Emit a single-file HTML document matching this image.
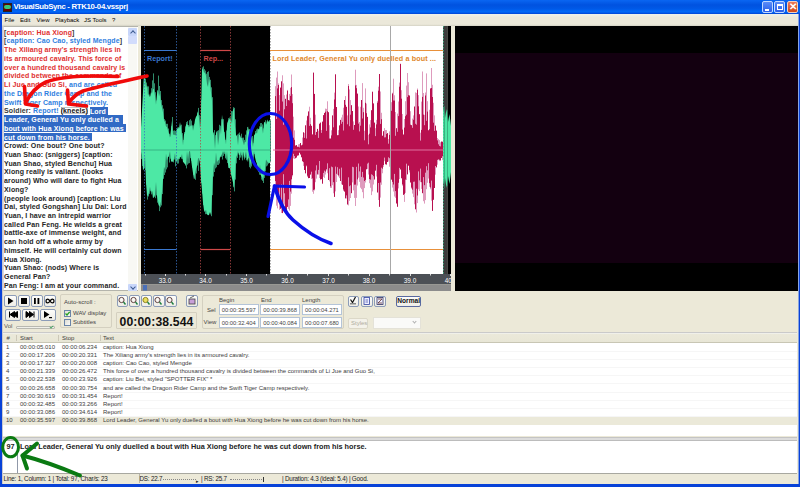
<!DOCTYPE html>
<html><head><meta charset="utf-8">
<style>
*{margin:0;padding:0;box-sizing:border-box}
html,body{width:800px;height:487px;overflow:hidden;background:#ece9d8;font-family:"Liberation Sans",sans-serif}
.a{position:absolute}
#title{left:0;top:0;width:800px;height:14px;background:linear-gradient(#0a66f2 0%,#0052e0 35%,#0058e6 60%,#0068f8 85%,#0042d4 100%)}
#menu{left:2px;top:14px;width:796px;height:12px;background:linear-gradient(#eef0ea,#ebe8da 30%,#ebe8da 85%,#d4d2c4)}
.mi{position:absolute;top:16.5px;font-size:6px;color:#000;white-space:nowrap}
#tp{left:2.5px;top:26px;width:136.5px;height:265px;background:#fff;border:1px solid #b4b4ac;border-left-color:#d8d8e0;overflow:hidden}
#tp .l{position:absolute;left:0.6px;font-weight:bold;font-size:7px;letter-spacing:0.1px;white-space:nowrap;color:#262626;line-height:8.7px}
.r{color:#e03030}.b{color:#3080e0}.g{color:#383838}
.sel{background:#316ac5;color:#fff;padding:0.6px 0}
.hl{box-shadow:inset 0 0 0 0.6px #909090;color:#111}
#vid{left:455px;top:26px;width:342.5px;height:265px;background:#000}
#vidp{left:455px;top:53px;width:342.5px;height:210px;background:#130010}
.tb{position:absolute;border:1px solid #8c9cb8;border-radius:2px;background:linear-gradient(#fdfdfb,#eeede6)}
.lst{position:absolute;font-size:6px;color:#3c3c3c;white-space:nowrap}
.bx{position:absolute;width:40px;height:11px;border:1px solid #b4c4d8;background:#fff;font-size:5.8px;color:#444;padding:1.8px 0 0 2px;white-space:nowrap}
</style></head><body>
<!-- window frame -->
<div class="a" style="left:0;top:0;width:2px;height:487px;background:#0842d8"></div><div class="a" style="left:2px;top:14px;width:1px;height:470px;background:#c8c8d0"></div>
<div class="a" style="left:797.5px;top:14px;width:1px;height:470px;background:#8aa4e0"></div><div class="a" style="left:798.5px;top:0;width:1.5px;height:487px;background:#0842d8"></div>
<div class="a" style="left:0;top:484px;width:800px;height:3px;background:#0842d8"></div>
<div id="title" class="a"></div>
<!-- icon -->
<div class="a" style="left:3px;top:3px;width:9px;height:9px;background:#600;border:1px solid #222"></div>
<div class="a" style="left:4px;top:5px;width:7px;height:4px;background:#38c878;border-radius:2px"></div>
<div class="a" style="left:13.5px;top:2.3px;font-size:7.8px;font-weight:bold;color:#fff;white-space:nowrap;letter-spacing:-0.32px">VisualSubSync - RTK10-04.vssprj</div>
<!-- title buttons -->
<div class="a" style="left:762px;top:1px;width:11px;height:12px;border:1px solid #c0d8ff;border-radius:2px;background:linear-gradient(#5a8cf8,#2a5ee8)"></div>
<div class="a" style="left:765px;top:9px;width:4px;height:1.5px;background:#fff"></div>
<div class="a" style="left:774px;top:1px;width:11px;height:12px;border:1px solid #c0d8ff;border-radius:2px;background:linear-gradient(#5a8cf8,#2a5ee8)"></div>
<div class="a" style="left:777px;top:4px;width:6px;height:6px;border:1px solid #fff;border-top-width:2px"></div>
<div class="a" style="left:787px;top:1px;width:11px;height:12px;border:1px solid #f0d0c0;border-radius:2px;background:linear-gradient(#e8785a,#d04818)"></div>
<div class="a" style="left:789px;top:2px;font-size:10px;color:#fff;font-weight:bold;line-height:10px">&#x2715;</div>
<div id="menu" class="a"></div>
<div class="mi" style="left:4.6px">File</div>
<div class="mi" style="left:20px">Edit</div>
<div class="mi" style="left:36.6px">View</div>
<div class="mi" style="left:55px">Playback</div>
<div class="mi" style="left:84px">JS Tools</div>
<div class="mi" style="left:112px">?</div>

<!-- text panel -->
<div id="tp" class="a">
<div class="l" style="top:1.70px"><span class="g">[</span><span class="r">caption: Hua Xiong</span><span class="g">]</span></div>
<div class="l" style="top:10.43px"><span class="g">[</span><span class="b">caption: Cao Cao, styled Mengde</span><span class="g">]</span></div>
<div class="l" style="top:19.16px"><span class="r">The Xiliang army's strength lies in</span></div>
<div class="l" style="top:27.89px"><span class="r">its armoured cavalry. This force of</span></div>
<div class="l" style="top:36.62px"><span class="r">over a hundred thousand cavalry is</span></div>
<div class="l" style="top:45.35px"><span class="r">divided between the commands of</span></div>
<div class="l" style="top:54.08px"><span class="r">Li Jue and Guo Si,</span><span class="b"> and are called</span></div>
<div class="l" style="top:62.81px"><span class="b">the Dragon Rider Camp and the</span></div>
<div class="l" style="top:71.54px"><span class="b">Swift Tiger Camp respectively.</span></div>
<div class="l" style="top:80.27px"><span class="g">Soldier: </span><span class="b">Report!</span> <span class="hl">(kneels)</span> <span class="sel">Lord&nbsp;</span></div>
<div class="l" style="top:89.00px"><span class="sel">Leader, General Yu only duelled a&nbsp;&nbsp;</span></div>
<div class="l" style="top:97.73px"><span class="sel">bout with Hua Xiong before he was&nbsp;</span></div>
<div class="l" style="top:106.46px"><span class="sel">cut down from his horse.&nbsp;</span></div>
<div class="l" style="top:115.19px">Crowd: One bout? One bout?</div>
<div class="l" style="top:123.92px">Yuan Shao: (sniggers) [caption:</div>
<div class="l" style="top:132.65px">Yuan Shao, styled Benchu] Hua</div>
<div class="l" style="top:141.38px">Xiong really is valiant. (looks</div>
<div class="l" style="top:150.11px">around) Who will dare to fight Hua</div>
<div class="l" style="top:158.84px">Xiong?</div>
<div class="l" style="top:167.57px">(people look around) [caption: Liu</div>
<div class="l" style="top:176.30px">Dai, styled Gongshan] Liu Dai: Lord</div>
<div class="l" style="top:185.03px">Yuan, I have an intrepid warrior</div>
<div class="l" style="top:193.76px">called Pan Feng. He wields a great</div>
<div class="l" style="top:202.49px">battle-axe of immense weight, and</div>
<div class="l" style="top:211.22px">can hold off a whole army by</div>
<div class="l" style="top:219.95px">himself. He will certainly cut down</div>
<div class="l" style="top:228.68px">Hua Xiong.</div>
<div class="l" style="top:237.41px">Yuan Shao: (nods) Where is</div>
<div class="l" style="top:246.14px">General Pan?</div>
<div class="l" style="top:254.87px">Pan Feng: I am at your command.</div>
<div id="sb"></div>
</div>

<!-- wave -->
<svg class="a" style="left:141px;top:26px" width="310" height="265" viewBox="141 26 310 265">
<rect x="141" y="26" width="129" height="248" fill="#000"/>
<rect x="270" y="26" width="173" height="248" fill="#fff"/>
<rect x="443" y="26" width="4.5" height="248" fill="#3c3c3c"/>
<rect x="447.5" y="26" width="3.5" height="248" fill="#000"/>
<path d="M141.5,126.4V159.0M142.5,114.3V166.0M143.5,89.8V168.8M144.5,77.1V168.1M145.5,78.7V170.1M146.5,82.5V184.8M147.5,86.4V199.6M148.5,86.4V196.5M149.5,97.4V193.8M150.5,96.2V190.8M151.5,88.2V194.4M152.5,80.4V189.5M153.5,73.4V197.8M154.5,83.3V196.8M155.5,92.2V198.2M156.5,100.4V195.4M157.5,90.4V202.7M158.5,75.6V204.5M159.5,86.0V211.1M160.5,91.0V207.3M161.5,100.1V205.5M162.5,105.2V194.1M163.5,108.6V178.8M164.5,119.1V175.0M165.5,120.5V172.5M166.5,123.8V169.4M167.5,123.8V167.4M168.5,128.5V156.9M169.5,133.7V162.5M170.5,139.5V158.7M171.5,126.2V161.8M172.5,117.0V161.3M173.5,130.7V162.4M174.5,130.4V159.5M175.5,131.0V166.4M176.5,129.9V157.3M177.5,130.8V163.6M178.5,127.4V163.5M179.5,127.9V159.2M180.5,125.6V153.1M181.5,124.7V158.7M182.5,133.1V158.9M183.5,139.9V156.6M184.5,132.0V162.0M185.5,126.4V165.6M186.5,122.1V168.4M187.5,121.1V164.7M188.5,125.0V163.5M189.5,120.2V163.1M190.5,119.1V158.1M191.5,120.6V160.8M192.5,125.4V167.6M193.5,125.4V174.9M194.5,123.9V178.7M195.5,119.9V179.8M196.5,119.8V173.5M197.5,112.6V165.5M198.5,107.9V170.9M199.5,115.2V160.5M200.5,126.0V166.7M201.5,99.9V183.0M202.5,67.4V193.6M203.5,66.3V205.1M204.5,69.1V211.7M205.5,70.6V214.2M206.5,73.7V214.1M207.5,72.0V212.2M208.5,71.3V214.3M209.5,76.9V208.8M210.5,79.8V212.1M211.5,87.3V216.2M212.5,97.2V195.2M213.5,132.5V176.6M214.5,130.1V172.0M215.5,135.1V168.4M216.5,131.5V167.3M217.5,130.8V164.9M218.5,130.2V164.9M219.5,124.8V163.5M220.5,125.7V157.3M221.5,119.3V156.8M222.5,119.3V159.5M223.5,119.2V155.9M224.5,132.1V154.1M225.5,139.8V158.3M226.5,130.5V159.7M227.5,122.5V163.1M228.5,118.2V167.9M229.5,119.3V163.3M230.5,119.0V167.4M231.5,111.0V174.4M232.5,111.2V176.0M233.5,107.2V186.8M234.5,107.8V191.4M235.5,119.3V179.6M236.5,135.6V163.4M237.5,134.5V157.9M238.5,133.6V153.2M239.5,132.5V160.0M240.5,140.3V157.6M241.5,133.7V155.2M242.5,137.7V160.4M243.5,137.6V152.1M244.5,139.9V159.5M245.5,134.7V157.7M246.5,130.4V160.3M247.5,127.0V154.0M248.5,129.4V158.2M249.5,129.1V167.2M250.5,139.4V168.4M251.5,136.5V166.5M252.5,136.0V161.1M253.5,143.3V162.6M254.5,135.3V154.0M255.5,131.0V156.5M256.5,129.4V161.9M257.5,128.5V167.6M258.5,129.5V168.7M259.5,126.3V174.7M260.5,123.1V175.0M261.5,123.0V179.6M262.5,124.4V180.8M263.5,128.4V183.0M264.5,122.5V177.9M265.5,120.2V171.4M266.5,124.1V166.4M267.5,119.8V165.5M268.5,121.8V163.7M269.5,120.0V160.6M270.5,120.4V161.7" stroke="#2f8c6a" stroke-width="1" fill="none"/>
<path d="M141,128.6 L142,109.9 L143,91.7 L144,73.3 L145,77.9 L146,88.1 L147,84.4 L148,95.8 L149,93.6 L150,97.4 L151,92.1 L152,93.7 L153,89.0 L154,89.2 L155,96.1 L156,104.7 L157,94.2 L158,89.5 L159,96.6 L160,93.0 L161,103.4 L162,107.7 L163,112.2 L164,120.3 L165,122.2 L166,126.4 L167,127.0 L168,130.6 L169,133.7 L170,137.7 L171,129.6 L172,120.8 L173,134.0 L174,135.3 L175,134.4 L176,135.7 L177,129.6 L178,126.8 L179,129.1 L180,122.1 L181,128.3 L182,135.5 L183,145.2 L184,134.2 L185,132.9 L186,124.3 L187,124.3 L188,125.2 L189,127.4 L190,125.2 L191,126.6 L192,124.3 L193,130.7 L194,126.8 L195,119.7 L196,116.7 L197,115.2 L198,111.1 L199,118.1 L200,128.5 L201,112.8 L202,69.2 L203,69.3 L204,72.5 L205,72.8 L206,75.6 L207,84.1 L208,87.0 L209,78.2 L210,83.2 L211,92.4 L212,100.7 L213,131.9 L214,135.2 L215,149.0 L216,133.5 L217,131.8 L218,145.2 L219,138.3 L220,127.3 L221,134.7 L222,114.7 L223,123.1 L224,130.6 L225,137.1 L226,144.4 L227,125.4 L228,120.7 L229,120.1 L230,116.6 L231,120.0 L232,123.8 L233,110.0 L234,108.4 L235,126.5 L236,135.1 L237,136.4 L238,145.2 L239,135.1 L240,135.0 L241,138.1 L242,138.3 L243,142.0 L244,145.3 L245,141.5 L246,142.3 L247,132.9 L248,126.2 L249,132.3 L250,132.5 L251,136.9 L252,141.1 L253,147.0 L254,135.4 L255,133.9 L256,132.4 L257,133.7 L258,128.4 L259,129.7 L260,127.6 L261,126.3 L262,127.0 L263,133.7 L264,122.8 L265,121.7 L266,125.0 L267,120.6 L268,122.0 L269,121.1 L270,121.7 L270,162.8 L269,163.2 L268,162.2 L267,161.2 L266,159.6 L265,169.2 L264,173.9 L263,181.0 L262,176.5 L261,176.6 L260,164.2 L259,172.5 L258,170.8 L257,164.1 L256,161.4 L255,157.2 L254,151.0 L253,157.5 L252,160.4 L251,160.7 L250,166.0 L249,152.7 L248,162.3 L247,158.7 L246,151.0 L245,155.4 L244,158.5 L243,151.0 L242,159.0 L241,151.0 L240,154.4 L239,155.5 L238,151.0 L237,155.2 L236,157.3 L235,176.3 L234,188.6 L233,182.5 L232,178.2 L231,174.3 L230,168.3 L229,168.2 L228,163.8 L227,151.0 L226,159.1 L225,151.0 L224,153.2 L223,151.0 L222,154.0 L221,155.7 L220,157.0 L219,159.9 L218,160.5 L217,162.3 L216,152.6 L215,166.2 L214,162.6 L213,173.6 L212,194.2 L211,215.3 L210,211.9 L209,215.1 L208,215.2 L207,214.3 L206,209.8 L205,211.4 L204,209.9 L203,202.5 L202,190.1 L201,179.2 L200,163.9 L199,157.7 L198,158.8 L197,166.3 L196,169.0 L195,173.7 L194,179.5 L193,172.9 L192,166.4 L191,159.1 L190,151.0 L189,151.5 L188,159.4 L187,151.0 L186,164.8 L185,164.2 L184,163.0 L183,161.8 L182,154.1 L181,157.5 L180,156.8 L179,159.1 L178,158.4 L177,160.4 L176,161.8 L175,153.0 L174,158.4 L173,162.1 L172,161.3 L171,161.0 L170,151.0 L169,155.4 L168,157.0 L167,160.6 L166,153.5 L165,169.3 L164,166.7 L163,179.7 L162,191.6 L161,201.4 L160,205.6 L159,206.6 L158,200.6 L157,196.1 L156,182.1 L155,194.8 L154,196.4 L153,198.2 L152,190.6 L151,192.8 L150,186.8 L149,192.6 L148,195.8 L147,195.6 L146,182.4 L145,155.0 L144,168.8 L143,170.5 L142,155.2 L141,151.0Z" fill="#4de8a5"/>
<line x1="141" y1="150" x2="270" y2="150" stroke="#36b484" stroke-width="1"/>
<path d="M275.5,86.2V188.0M276.5,77.6V205.7M277.5,71.5V208.4M278.5,83.4V202.5M279.5,95.1V209.9M280.5,89.8V208.7M281.5,83.2V213.0M282.5,75.3V209.4M283.5,83.4V208.7M284.5,95.2V204.6M285.5,101.9V209.3M286.5,94.5V210.5M287.5,89.9V206.1M288.5,103.8V208.9M289.5,93.9V210.6M290.5,87.9V205.9M291.5,74.5V193.7M292.5,94.1V176.4M293.5,116.7V158.4M294.5,130.4V159.0M295.5,151.1V158.5M296.5,152.1V150.5M297.5,151.1V152.5M298.5,144.3V155.5M299.5,144.0V152.5M300.5,143.3V152.2M301.5,146.0V156.9M302.5,137.6V155.6M303.5,132.4V165.9M304.5,132.9V167.2M305.5,134.0V173.7M306.5,120.5V166.5M307.5,115.6V177.0M308.5,116.5V177.9M309.5,106.7V177.7M310.5,117.8V174.0M311.5,128.7V179.0M312.5,135.4V191.7M313.5,74.5V193.8M314.5,96.2V190.5M315.5,114.7V182.2M316.5,133.8V178.6M317.5,130.6V175.0M318.5,130.8V174.6M319.5,129.8V178.0M320.5,124.0V180.2M321.5,130.0V178.8M322.5,121.2V176.8M323.5,117.3V176.8M324.5,117.7V177.9M325.5,108.6V174.5M326.5,108.9V170.4M327.5,101.3V173.2M328.5,117.4V175.9M329.5,125.2V181.4M330.5,140.7V188.0M331.5,130.3V187.9M332.5,117.0V185.2M333.5,108.9V193.3M334.5,92.6V190.3M335.5,76.9V191.4M336.5,108.3V182.0M337.5,137.5V174.8M338.5,130.2V176.6M339.5,131.1V178.1M340.5,121.6V176.7M341.5,117.5V184.3M342.5,114.7V184.3M343.5,107.7V191.0M344.5,100.2V188.5M345.5,96.1V194.5M346.5,111.2V198.5M347.5,115.4V203.0M348.5,84.1V205.4M349.5,89.4V200.9M350.5,100.1V198.0M351.5,105.0V190.9M352.5,113.6V182.4M353.5,121.4V190.4M354.5,128.9V197.9M355.5,69.7V206.0M356.5,84.9V197.9M357.5,97.4V185.5M358.5,106.5V177.7M359.5,122.0V181.8M360.5,106.8V187.7M361.5,104.9V189.2M362.5,83.1V192.2M363.5,107.8V198.3M364.5,130.8V188.1M365.5,88.4V182.5M366.5,103.6V168.1M367.5,116.7V168.9M368.5,134.8V174.5M369.5,124.4V183.2M370.5,120.1V187.8M371.5,111.1V195.1M372.5,92.2V191.4M373.5,106.6V184.5M374.5,123.0V174.5M375.5,128.2V170.8M376.5,119.9V176.5M377.5,100.9V189.0M378.5,86.7V200.0M379.5,82.1V206.4M380.5,91.5V197.6M381.5,112.8V184.8M382.5,141.1V173.3M383.5,131.0V166.9M384.5,128.1V161.2M385.5,130.0V157.3M386.5,130.0V165.1M387.5,133.0V155.7M388.5,139.1V161.5M389.5,131.4V166.7M390.5,116.8V174.0M391.5,102.2V180.0M392.5,92.7V187.6M393.5,78.7V191.5M394.5,95.3V196.5M395.5,112.0V197.8M396.5,136.9V201.6M397.5,113.6V197.8M398.5,101.5V188.4M399.5,82.6V179.0M400.5,71.2V164.7M401.5,90.2V173.7M402.5,114.0V185.7M403.5,136.0V191.0M404.5,119.0V201.9M405.5,101.2V192.9M406.5,85.6V180.0M407.5,73.0V169.3M408.5,82.2V162.3M409.5,97.3V172.5M410.5,111.2V180.9M411.5,125.3V188.7M412.5,118.6V193.6M413.5,115.4V197.1M414.5,107.0V204.3M415.5,92.4V207.7M416.5,92.9V212.5M417.5,88.5V203.1M418.5,95.1V189.3M419.5,117.6V191.1M420.5,132.7V182.1M421.5,101.6V188.9M422.5,71.5V192.2M423.5,93.0V201.2M424.5,114.9V203.6M425.5,92.5V200.1M426.5,73.4V189.2M427.5,101.2V182.8M428.5,130.4V178.5M429.5,109.8V186.8M430.5,90.5V189.3M431.5,68.0V200.7M432.5,84.8V210.2M433.5,102.8V197.3M434.5,115.4V186.8M435.5,127.3V174.7M436.5,132.1V163.1M437.5,138.0V164.7M438.5,139.2V160.2M439.5,140.1V161.1M440.5,142.3V157.2M441.5,145.4V153.7M442.5,141.7V160.2M443.5,144.8V157.6" stroke="#d070a0" stroke-width="0.7" fill="none"/>
<path d="M275.5,96.1V181.1M276.5,119.0V196.5M277.5,88.4V192.9M278.5,85.0V197.6M279.5,110.7V184.8M280.5,87.6V208.7M281.5,81.3V184.4M282.5,101.5V213.1M283.5,124.8V174.2M284.5,109.3V193.3M285.5,98.8V211.0M286.5,106.0V210.6M287.5,90.8V206.9M288.5,100.1V199.4M289.5,100.5V180.9M290.5,95.9V191.6M291.5,87.1V179.3M292.5,103.2V175.1M293.5,137.7V153.8M294.5,139.8V156.0M295.5,145.5V158.1M296.5,145.1V157.6M297.5,146.7V155.7M298.5,146.9V155.2M299.5,147.4V152.7M300.5,143.0V154.5M301.5,145.3V157.3M302.5,144.7V161.3M303.5,132.4V162.1M304.5,137.9V170.0M305.5,125.3V173.1M306.5,138.5V165.6M307.5,116.2V175.7M308.5,111.4V178.2M309.5,125.9V178.0M310.5,124.2V174.6M311.5,125.8V171.7M312.5,134.4V178.4M313.5,72.6V189.9M314.5,93.9V189.4M315.5,134.9V170.5M316.5,131.9V165.3M317.5,128.9V173.9M318.5,137.9V169.9M319.5,123.7V161.0M320.5,122.6V179.2M321.5,132.9V179.2M322.5,121.9V183.7M323.5,115.1V172.9M324.5,112.9V170.6M325.5,111.7V171.6M326.5,130.9V169.1M327.5,111.2V163.3M328.5,112.2V180.0M329.5,138.5V168.2M330.5,138.5V186.3M331.5,135.4V166.6M332.5,115.4V167.2M333.5,127.3V182.2M334.5,99.5V196.9M335.5,74.3V166.6M336.5,107.0V173.8M337.5,135.2V167.2M338.5,135.1V175.4M339.5,125.4V168.8M340.5,119.9V181.0M341.5,123.8V167.6M342.5,121.9V184.8M343.5,130.5V189.5M344.5,100.0V191.6M345.5,104.8V198.4M346.5,106.8V195.4M347.5,124.3V204.5M348.5,86.0V177.3M349.5,126.2V186.2M350.5,114.7V185.3M351.5,105.3V193.2M352.5,111.0V166.8M353.5,129.8V167.2M354.5,125.0V184.7M355.5,85.4V184.6M356.5,88.2V166.8M357.5,93.6V179.4M358.5,123.6V163.5M359.5,131.4V171.4M360.5,125.7V166.5M361.5,100.0V176.9M362.5,118.5V171.9M363.5,112.2V177.5M364.5,140.3V181.0M365.5,102.8V179.9M366.5,113.2V169.3M367.5,117.0V163.6M368.5,144.3V162.7M369.5,133.7V179.0M370.5,127.4V179.6M371.5,110.2V174.3M372.5,91.7V174.9M373.5,103.4V176.2M374.5,122.6V179.5M375.5,136.1V170.5M376.5,124.4V164.8M377.5,102.7V192.5M378.5,90.7V183.0M379.5,74.0V206.8M380.5,123.9V182.5M381.5,119.2V167.7M382.5,135.7V168.7M383.5,131.3V165.0M384.5,137.4V157.6M385.5,137.3V164.3M386.5,133.9V164.3M387.5,133.2V162.0M388.5,143.7V157.3M389.5,134.9V158.2M390.5,117.0V175.2M391.5,110.8V179.4M392.5,93.6V181.9M393.5,100.5V184.5M394.5,100.6V173.9M395.5,135.8V191.1M396.5,128.2V203.5M397.5,131.8V206.8M398.5,116.1V182.8M399.5,86.7V167.9M400.5,63.8V169.5M401.5,98.7V178.3M402.5,129.6V184.4M403.5,134.5V194.9M404.5,127.6V193.9M405.5,116.2V179.6M406.5,114.7V163.7M407.5,97.1V174.4M408.5,95.2V165.7M409.5,95.5V170.2M410.5,124.7V182.5M411.5,125.2V187.6M412.5,127.8V189.7M413.5,119.8V181.8M414.5,106.5V181.6M415.5,123.8V209.3M416.5,124.7V188.7M417.5,89.9V195.5M418.5,106.3V171.4M419.5,114.2V180.4M420.5,140.6V168.6M421.5,129.9V182.2M422.5,96.9V193.2M423.5,114.6V177.1M424.5,125.2V185.2M425.5,95.5V172.7M426.5,120.8V166.2M427.5,111.6V170.3M428.5,130.3V163.2M429.5,129.2V183.2M430.5,88.4V187.5M431.5,88.0V180.6M432.5,97.0V210.9M433.5,122.7V199.8M434.5,130.9V188.0M435.5,125.6V166.0M436.5,130.6V167.4M437.5,140.4V159.9M438.5,144.3V159.2M439.5,145.9V159.8M440.5,146.4V160.5M441.5,141.5V158.0M442.5,141.8V156.2" stroke="#b8104f" stroke-width="1" fill="none"/>
<line x1="273" y1="150" x2="443" y2="150" stroke="#e070a0" stroke-width="1"/>
<path d="M443,112 L444,106 L445,118 L446.5,109 L448,122 L449.5,114 L451,126 V172 L449.5,184 L448,176 L446.5,188 L445,178 L444,186 L443,180Z" fill="#4de8a5"/><path d="M444.5,106V188 M447.5,110V186" stroke="#2f8c6a" stroke-width="0.6"/>
<g stroke-width="1" stroke-dasharray="1.5,1.5" opacity="0.75">
<line x1="144.5" y1="26" x2="144.5" y2="274" stroke="#3a70c0"/>
<line x1="176.5" y1="26" x2="176.5" y2="274" stroke="#3a70c0"/>
<line x1="200.5" y1="26" x2="200.5" y2="274" stroke="#b04848"/>
<line x1="230.5" y1="26" x2="230.5" y2="274" stroke="#b04848"/>
<line x1="270.5" y1="26" x2="270.5" y2="274" stroke="#909090"/>
<line x1="443.5" y1="26" x2="443.5" y2="274" stroke="#40c090"/>
</g>
<line x1="144" y1="50.5" x2="176.5" y2="50.5" stroke="#3a78d0" stroke-width="1.2"/>
<line x1="144" y1="249.5" x2="176.5" y2="249.5" stroke="#3a78d0" stroke-width="1.2"/>
<line x1="200.5" y1="50.5" x2="230.5" y2="50.5" stroke="#d04848" stroke-width="1.2"/>
<line x1="200.5" y1="249.5" x2="230.5" y2="249.5" stroke="#d04848" stroke-width="1.2"/>
<line x1="270" y1="50.5" x2="443" y2="50.5" stroke="#e8903a" stroke-width="1.2"/>
<line x1="270" y1="249.5" x2="443" y2="249.5" stroke="#e8903a" stroke-width="1.2"/>
<line x1="390.5" y1="26" x2="390.5" y2="274" stroke="#a8a8a8" stroke-width="1"/>
<g font-family="Liberation Sans" font-weight="bold" font-size="7.2">
<text x="147" y="60.5" fill="#3a78d0">Report!</text>
<text x="203.5" y="60.5" fill="#d04848">Rep...</text>
<text x="272.5" y="60.5" fill="#e0862a" letter-spacing="0.12">Lord Leader, General Yu only duelled a bout ...</text>
</g>
<rect x="141" y="274" width="310" height="10.4" fill="#4c5056"/>
<rect x="141" y="284.4" width="310" height="6.6" fill="#8c8c8c"/>
<rect x="143" y="285" width="4" height="5.5" fill="#4a70b8"/>
<g fill="#dcdcdc">
<rect x="145" y="274" width="1" height="1.5"/><rect x="165" y="274" width="1" height="2"/><rect x="185" y="274" width="1" height="1.5"/><rect x="205" y="274" width="1" height="2"/><rect x="226" y="274" width="1" height="1.5"/><rect x="246" y="274" width="1" height="2"/><rect x="266" y="274" width="1" height="1.5"/><rect x="287" y="274" width="1" height="2"/><rect x="307" y="274" width="1" height="1.5"/><rect x="328" y="274" width="1" height="2"/><rect x="348" y="274" width="1" height="1.5"/><rect x="369" y="274" width="1" height="2"/><rect x="389" y="274" width="1" height="1.5"/><rect x="410" y="274" width="1" height="2"/><rect x="430" y="274" width="1" height="1.5"/><rect x="450" y="274" width="1" height="2"/>
</g>
<g font-family="Liberation Sans" font-size="6.4" fill="#fff" text-anchor="middle">
<text x="165" y="283">33.0</text><text x="205.5" y="283">34.0</text><text x="246.5" y="283">35.0</text><text x="287.5" y="283">36.0</text><text x="328.5" y="283">37.0</text><text x="369" y="283">38.0</text><text x="410" y="283">39.0</text><text x="451" y="283">40.0</text>
</g>
</svg>
<!-- /wave -->
<!-- video -->
<div id="vid" class="a"></div>
<div id="vidp" class="a"></div>

<!-- part2 -->
<!-- text scrollbar -->
<div class="a" style="left:128px;top:27px;width:9px;height:264px;background:#f8f8f4"></div>
<div class="a" style="left:128px;top:27.5px;width:9px;height:8px;background:#c8d6fa;border-radius:1px"></div>
<div class="a" style="left:130.5px;top:29.5px;width:4px;height:4px;border-left:1.3px solid #3c5a90;border-top:1.3px solid #3c5a90;transform:rotate(45deg);transform-origin:center;top:31px"></div>
<div class="a" style="left:128px;top:36px;width:9px;height:8px;background:#d2dcfc;border-radius:1px"></div>
<div class="a" style="left:128px;top:283.5px;width:9px;height:7.5px;background:#c8d6fa;border-radius:1px"></div>
<div class="a" style="left:130.5px;top:284.5px;width:4px;height:4px;border-right:1.3px solid #3c5a90;border-bottom:1.3px solid #3c5a90;transform:rotate(45deg)"></div>
<!-- panel borders -->
<div class="a" style="left:138px;top:26px;width:3px;height:265px;background:#ece9d8"></div>
<div class="a" style="left:451px;top:26px;width:4px;height:265px;background:#ece9d8"></div>

<!-- playback buttons -->
<div class="tb" style="left:4px;top:295px;width:12.5px;height:12px"></div>
<div class="tb" style="left:17.5px;top:295px;width:12.5px;height:12px"></div>
<div class="tb" style="left:30.5px;top:295px;width:12.5px;height:12px"></div>
<div class="tb" style="left:44px;top:295px;width:12px;height:12px"></div>
<div class="tb" style="left:4.5px;top:308.5px;width:16px;height:12px"></div>
<div class="tb" style="left:22px;top:308.5px;width:16.5px;height:12px"></div>
<div class="tb" style="left:39.5px;top:308.5px;width:16px;height:12px"></div>
<svg class="a" style="left:0;top:290px" width="60" height="35" viewBox="0 290 60 35">
<path d="M8,297.5 L13.5,301 L8,304.5Z" fill="#000"/>
<rect x="21" y="298" width="6" height="6" fill="#000"/>
<rect x="34" y="298" width="1.8" height="6" fill="#000"/><rect x="37.5" y="298" width="1.8" height="6" fill="#000"/>
<path d="M50,301 C48.5,298.5 46,298.5 46,301 C46,303.5 48.5,303.5 50,301 C51.5,298.5 54,298.5 54,301 C54,303.5 51.5,303.5 50,301Z" fill="none" stroke="#000" stroke-width="1.3"/>
<path d="M9.5,311.5 V317.5 M14.5,311.5 L10,314.5 L14.5,317.5Z M17.5,311.5 L13,314.5 L17.5,317.5Z" fill="#000" stroke="#000" stroke-width="1"/>
<path d="M26,311.5 L30,314.5 L26,317.5Z M29.5,311.5 L33.5,314.5 L29.5,317.5Z M34,311.5 V317.5" fill="#000" stroke="#000" stroke-width="1"/>
<path d="M44,311 L49.5,314.5 L44,318Z" fill="#000"/><rect x="49" y="317" width="3" height="1.2" fill="#000"/>
</svg>
<div class="a" style="left:4px;top:322.5px;font-size:6px;color:#555">Vol</div>
<div class="a" style="left:16px;top:325.5px;width:39px;height:3px;border:1px solid #b8b8b0;border-radius:1px;background:#f0f0ea"></div>
<div class="a" style="left:49.5px;top:324px;width:3px;height:5px;border-right:1px solid #30a050;border-bottom:1px solid #30a050;transform:rotate(45deg) scale(0.7)"></div>

<!-- autoscroll group -->
<div class="a" style="left:60px;top:294px;width:52px;height:34px;border:1px solid #d4d0c0;border-radius:2px"></div>
<div class="a" style="left:64px;top:298.5px;font-size:6px;color:#444;white-space:nowrap">Auto-scroll :</div>
<div class="a" style="left:64px;top:309.5px;width:7px;height:7px;border:1px solid #6a84a8;background:linear-gradient(135deg,#dcdcd4,#fafaf8)"></div>
<svg class="a" style="left:64px;top:309.5px" width="7" height="7"><path d="M1.5,3.5 L3,5 L5.7,1.8" stroke="#21a121" stroke-width="1.3" fill="none"/></svg>
<div class="a" style="left:73px;top:309.5px;font-size:6px;color:#444;white-space:nowrap">WAV display</div>
<div class="a" style="left:64px;top:318.5px;width:7px;height:7px;border:1px solid #6a84a8;background:linear-gradient(135deg,#dcdcd4,#fafaf8)"></div>
<div class="a" style="left:73px;top:318.5px;font-size:6px;color:#444;white-space:nowrap">Subtitles</div>

<!-- zoom buttons -->
<div class="tb" style="left:117px;top:295px;width:11px;height:12px"></div>
<div class="tb" style="left:129px;top:295px;width:11px;height:12px"></div>
<div class="tb" style="left:141px;top:295px;width:11px;height:12px"></div>
<div class="tb" style="left:153px;top:295px;width:11.5px;height:12px"></div>
<div class="tb" style="left:165px;top:295px;width:11.5px;height:12px"></div>
<div class="tb" style="left:186px;top:295px;width:11.5px;height:12px"></div>
<svg class="a" style="left:115px;top:293px" width="85" height="16" viewBox="115 293 85 16">
<g fill="none" stroke-width="1">
<circle cx="121.5" cy="300" r="2.6" stroke="#604040"/><path d="M123.5,302 L125.5,304.5" stroke="#208040" stroke-width="1.4"/>
<circle cx="133.5" cy="300" r="2.6" stroke="#604040"/><path d="M135.5,302 L137.5,304.5" stroke="#208040" stroke-width="1.4"/>
<circle cx="145.5" cy="300" r="2.6" stroke="#908020" fill="#e8e060"/><path d="M147.5,302 L149.5,304.5" stroke="#208040" stroke-width="1.4"/>
<circle cx="157.5" cy="300" r="2.6" stroke="#604040"/><path d="M159.5,302 L161.5,304.5" stroke="#208040" stroke-width="1.4"/>
<circle cx="169.5" cy="300" r="2.6" stroke="#604040"/><path d="M171.5,302 L173.5,304.5" stroke="#208040" stroke-width="1.4"/>
</g>
<rect x="189" y="299" width="6" height="5" fill="#c8a0d8" stroke="#404040" stroke-width="0.8"/>
<path d="M190,298 L194,296" stroke="#404040" stroke-width="0.8"/>
</svg>
<!-- time display -->
<div class="a" style="left:116px;top:312px;width:81px;height:17px;border:1px solid #d4d0c0;border-radius:1px"></div>
<div class="a" style="left:119.5px;top:314.5px;font-size:12.2px;font-weight:bold;color:#111;white-space:nowrap;letter-spacing:0.12px">00:00:38.544</div>

<!-- begin/end group -->
<div class="a" style="left:201.5px;top:295px;width:142.5px;height:33.5px;border:1px solid #d4d0c0;border-radius:2px"></div>
<div class="a" style="left:219px;top:296.5px;font-size:6px;color:#444">Begin</div>
<div class="a" style="left:261px;top:296.5px;font-size:6px;color:#444">End</div>
<div class="a" style="left:302px;top:296.5px;font-size:6px;color:#444">Length</div>
<div class="a" style="left:207px;top:306.5px;font-size:6px;color:#444">Sel</div>
<div class="a" style="left:203.5px;top:319px;font-size:6px;color:#444">View</div>
<div class="a bx" style="left:218.8px;top:304.3px">00:00:35.597</div>
<div class="a bx" style="left:260.2px;top:304.3px">00:00:39.868</div>
<div class="a bx" style="left:302px;top:304.3px">00:00:04.271</div>
<div class="a bx" style="left:218.8px;top:317px">00:00:32.404</div>
<div class="a bx" style="left:260.2px;top:317px">00:00:40.084</div>
<div class="a bx" style="left:302px;top:317px">00:00:07.680</div>

<!-- icons -->
<div class="tb" style="left:347.5px;top:295.5px;width:11.5px;height:11.5px"></div>
<div class="tb" style="left:361px;top:295.5px;width:11.5px;height:11.5px"></div>
<div class="tb" style="left:374px;top:295.5px;width:12px;height:11.5px"></div>
<svg class="a" style="left:345px;top:293px" width="45" height="16" viewBox="345 293 45 16">
<path d="M350.5,299.5 L352.5,302.5 L355.5,297" stroke="#111" stroke-width="1.2" fill="none"/><rect x="350" y="303" width="6" height="1.5" fill="#888"/>
<rect x="364" y="297.5" width="5.5" height="7" fill="#eef" stroke="#3040a0" stroke-width="0.8"/><path d="M365.5,300 h2.5 M365.5,302 h2.5" stroke="#3040a0" stroke-width="0.7"/>
<rect x="377" y="297.5" width="6" height="7" fill="#eef" stroke="#303060" stroke-width="0.8"/><path d="M378,299 h4 L378,303 h4" stroke="#603030" stroke-width="0.8" fill="none"/>
</svg>
<div class="tb" style="left:395.5px;top:295.5px;width:25.5px;height:11.5px;border-color:#5a6aa0"></div>
<div class="a" style="left:397.3px;top:297.2px;font-size:6.6px;font-weight:bold;color:#111;letter-spacing:0px">Normal</div>
<div class="a" style="left:348px;top:317.5px;width:20px;height:11px;border:1px solid #dcd8c8;border-radius:2px;background:#f4f2ea"></div>
<div class="a" style="left:351px;top:319.5px;font-size:6px;color:#b0ada0">Styles</div>
<div class="a" style="left:372.5px;top:317px;width:48.5px;height:11.5px;border:1px solid #e4e2d8;background:#fafaf8"></div>
<div class="a" style="left:413px;top:320px;width:3px;height:3px;border-right:1px solid #b0b0b0;border-bottom:1px solid #b0b0b0;transform:rotate(45deg)"></div>

<!-- separator -->
<div class="a" style="left:3px;top:332px;width:794px;height:1.2px;background:#cacaca"></div>
<div class="a" style="left:3px;top:333.2px;width:794px;height:0.8px;background:#f0f0ea"></div>

<!-- list -->
<div class="a" style="left:3px;top:334px;width:794px;height:9px;background:linear-gradient(#ebe9da,#e8e6d6);border-bottom:1px solid #c8c6b4"></div>
<div class="a" style="left:15.5px;top:335px;width:1px;height:6px;background:#ccc8b8"></div>
<div class="a" style="left:57.5px;top:335px;width:1px;height:6px;background:#ccc8b8"></div>
<div class="a" style="left:99.5px;top:335px;width:1px;height:6px;background:#ccc8b8"></div>
<div class="lst" style="left:6.5px;top:334.5px">#</div>
<div class="lst" style="left:20px;top:334.5px">Start</div>
<div class="lst" style="left:62px;top:334.5px">Stop</div>
<div class="lst" style="left:103px;top:334.5px">Text</div>
<div class="a" style="left:3px;top:343px;width:794px;height:93px;background:#fff"></div>
<div class="a" style="left:3px;top:415.6px;width:794px;height:9px;background:#ebe9d9"></div>
<div class="lst" style="left:6px;top:343.80px">1</div><div class="lst" style="left:20px;top:343.80px">00:00:05.010</div><div class="lst" style="left:62px;top:343.80px">00:00:06.234</div><div class="lst" style="left:103px;top:343.80px">caption: Hua Xiong</div>
<div class="a" style="left:3px;top:350.80px;width:794px;height:0.5px;background:#f6f6f6"></div>
<div class="lst" style="left:6px;top:351.95px">2</div><div class="lst" style="left:20px;top:351.95px">00:00:17.206</div><div class="lst" style="left:62px;top:351.95px">00:00:20.331</div><div class="lst" style="left:103px;top:351.95px">The Xiliang army's strength lies in its armoured cavalry.</div>
<div class="a" style="left:3px;top:358.95px;width:794px;height:0.5px;background:#f6f6f6"></div>
<div class="lst" style="left:6px;top:360.10px">3</div><div class="lst" style="left:20px;top:360.10px">00:00:17.327</div><div class="lst" style="left:62px;top:360.10px">00:00:20.008</div><div class="lst" style="left:103px;top:360.10px">caption: Cao Cao, styled Mengde</div>
<div class="a" style="left:3px;top:367.10px;width:794px;height:0.5px;background:#f6f6f6"></div>
<div class="lst" style="left:6px;top:368.25px">4</div><div class="lst" style="left:20px;top:368.25px">00:00:21.339</div><div class="lst" style="left:62px;top:368.25px">00:00:26.472</div><div class="lst" style="left:103px;top:368.25px">This force of over a hundred thousand cavalry is divided between the commands of Li Jue and Guo Si,</div>
<div class="a" style="left:3px;top:375.25px;width:794px;height:0.5px;background:#f6f6f6"></div>
<div class="lst" style="left:6px;top:376.40px">5</div><div class="lst" style="left:20px;top:376.40px">00:00:22.538</div><div class="lst" style="left:62px;top:376.40px">00:00:23.926</div><div class="lst" style="left:103px;top:376.40px">caption: Liu Bei, styled "SPOTTER FIX" *</div>
<div class="a" style="left:3px;top:383.40px;width:794px;height:0.5px;background:#f6f6f6"></div>
<div class="lst" style="left:6px;top:384.55px">6</div><div class="lst" style="left:20px;top:384.55px">00:00:26.658</div><div class="lst" style="left:62px;top:384.55px">00:00:30.754</div><div class="lst" style="left:103px;top:384.55px">and are called the Dragon Rider Camp and the Swift Tiger Camp respectively.</div>
<div class="a" style="left:3px;top:391.55px;width:794px;height:0.5px;background:#f6f6f6"></div>
<div class="lst" style="left:6px;top:392.70px">7</div><div class="lst" style="left:20px;top:392.70px">00:00:30.619</div><div class="lst" style="left:62px;top:392.70px">00:00:31.454</div><div class="lst" style="left:103px;top:392.70px">Report!</div>
<div class="a" style="left:3px;top:399.70px;width:794px;height:0.5px;background:#f6f6f6"></div>
<div class="lst" style="left:6px;top:400.85px">8</div><div class="lst" style="left:20px;top:400.85px">00:00:32.485</div><div class="lst" style="left:62px;top:400.85px">00:00:33.266</div><div class="lst" style="left:103px;top:400.85px">Report!</div>
<div class="a" style="left:3px;top:407.85px;width:794px;height:0.5px;background:#f6f6f6"></div>
<div class="lst" style="left:6px;top:409.00px">9</div><div class="lst" style="left:20px;top:409.00px">00:00:33.086</div><div class="lst" style="left:62px;top:409.00px">00:00:34.614</div><div class="lst" style="left:103px;top:409.00px">Report!</div>
<div class="a" style="left:3px;top:416.00px;width:794px;height:0.5px;background:#f6f6f6"></div>
<div class="lst" style="left:6px;top:417.15px">10</div><div class="lst" style="left:20px;top:417.15px">00:00:35.597</div><div class="lst" style="left:62px;top:417.15px">00:00:39.868</div><div class="lst" style="left:103px;top:417.15px">Lord Leader, General Yu only duelled a bout with Hua Xiong before he was cut down from his horse.</div>
<!-- edit area -->
<div class="a" style="left:3px;top:436.8px;width:794px;height:4px;background:#dcdcdc;border-top:1px solid #c4c4c4;border-bottom:1px solid #bcbcbc"></div>
<div class="a" style="left:3px;top:440.8px;width:794px;height:32.2px;background:#fff"></div>
<div class="a" style="left:17px;top:440.8px;width:1px;height:32.2px;background:#9098a8"></div>
<div class="a" style="left:6.5px;top:441.6px;font-size:7.3px;font-weight:bold;color:#222">97</div>
<div class="a" style="left:20px;top:441.6px;font-size:7.3px;font-weight:bold;color:#222;white-space:nowrap">Lord Leader, General Yu only duelled a bout with Hua Xiong before he was cut down from his horse.</div>
<!-- status bar -->
<div class="a" style="left:3px;top:473px;width:794px;height:10.5px;background:#ece9d8;border-top:1px solid #a8a8a0"></div>
<div class="a" style="left:138.5px;top:474px;width:1px;height:9px;background:#b8b4a8"></div>
<div class="a" style="left:3.5px;top:475px;font-size:6.3px;color:#222;white-space:nowrap;letter-spacing:-0.2px">Line: 1, Column: 1 | Total: 97, Char/s: 23</div>
<div class="a" style="left:139.5px;top:475px;font-size:6.3px;color:#222;white-space:nowrap;letter-spacing:-0.2px">DS: 22.7</div>
<div class="a" style="left:163px;top:479px;width:33px;height:0;border-top:1px dotted #888"></div>
<div class="a" style="left:195.5px;top:477.5px;font-size:5px;color:#222">&#x25B8;</div>
<div class="a" style="left:201px;top:475px;font-size:6.3px;color:#222;white-space:nowrap;letter-spacing:-0.2px">| RS: 25.7</div>
<div class="a" style="left:230px;top:479px;width:34px;height:0;border-top:1px dotted #888"></div>
<div class="a" style="left:263px;top:476.5px;width:1px;height:5px;background:#333"></div>
<div class="a" style="left:282px;top:475px;font-size:6.3px;color:#222;white-space:nowrap;letter-spacing:-0.2px">| Duration: 4.3 (ideal: 5.4) | Good.</div>
<!-- /part2 -->
<!-- ann -->
<svg class="a" style="left:0;top:0" width="800" height="487" viewBox="0 0 800 487">
<g fill="none" stroke="#f00a0a" stroke-width="3.6" stroke-linecap="round" stroke-linejoin="round">
<path d="M118,76.5 C95,75.5 62,76 46,82 C36,86.5 30,94 25.5,103"/>
<path d="M24.5,86.5 L25.5,104 L37.5,106"/>
<path d="M147,76 C125,81 98,86 83,91 C76,94 72,98 68.5,103"/>
<path d="M67.5,90 L68.5,104 L86.5,106"/>
</g>
<g fill="none" stroke="#0a10e8" stroke-width="3.2" stroke-linecap="round" stroke-linejoin="round">
<ellipse cx="270.5" cy="144" rx="21.2" ry="30.5"/>
<path d="M268,216.5 L274.5,186 L304.5,187"/>
<path d="M274.5,186 C278,198 284,212 293,220 C303,229 318,239 331,243.5" stroke-width="3.6"/>
</g>
<g fill="none" stroke="#0a7a12" stroke-width="3" stroke-linecap="round" stroke-linejoin="round">
<ellipse cx="10.6" cy="447.2" rx="7.9" ry="9.6"/>
<path d="M37,443.5 L22.5,455.5 L27,468.5" stroke-width="4"/>
<path d="M22.5,455.5 C40,460 62,468 80,475.5" stroke-width="4"/>
</g>
</svg>
<!-- /ann -->
</body></html>
